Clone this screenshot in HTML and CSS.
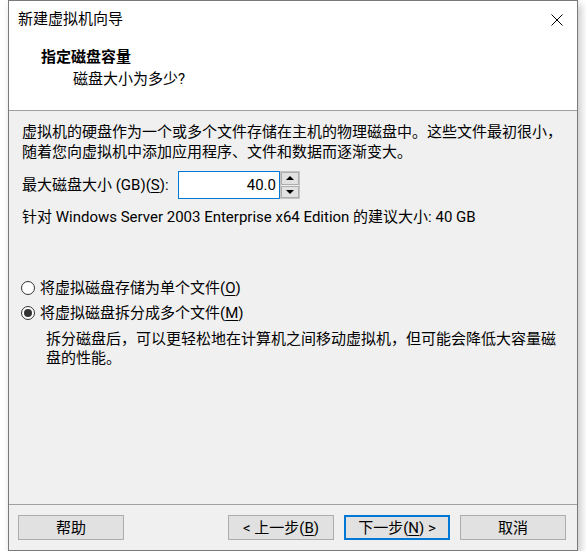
FILE: index.html
```html
<!DOCTYPE html>
<html lang="zh-CN">
<head>
<meta charset="utf-8">
<title>新建虚拟机向导</title>
<link rel="stylesheet" href="styles.css">
</head>
<body>
<div class="window">
  <div class="titlebar">
    <span class="title">新建虚拟机向导</span>
    <svg class="close" width="12" height="12" viewBox="0 0 12 12"><path d="M0.5 0.5 L11.5 11.5 M11.5 0.5 L0.5 11.5" stroke="#000" stroke-width="1" fill="none"/></svg>
  </div>
  <div class="header">
    <div class="heading">指定磁盘容量</div>
    <div class="subheading">磁盘大小为多少?</div>
  </div>
  <div class="content">
    <p class="para">虚拟机的硬盘作为一个或多个文件存储在主机的物理磁盘中。这些文件最初很小，<br>随着您向虚拟机中添加应用程序、文件和数据而逐渐变大。</p>
    <div class="size-row">
      <label class="size-label">最大磁盘大小 (GB)(<u>S</u>):</label>
      <div class="spin">
        <div class="spin-input">40.0</div>
        <div class="spin-buttons">
          <div class="spin-btn"><span class="arrow-up"></span></div>
          <div class="spin-btn"><span class="arrow-down"></span></div>
        </div>
      </div>
    </div>
    <p class="recommend">针对 Windows Server 2003 Enterprise x64 Edition 的建议大小: 40 GB</p>
    <div class="radios">
      <div class="radio-row"><span class="radio"></span><span>将虚拟磁盘存储为单个文件(<u>O</u>)</span></div>
      <div class="radio-row"><span class="radio checked"></span><span>将虚拟磁盘拆分成多个文件(<u>M</u>)</span></div>
    </div>
    <p class="desc">拆分磁盘后，可以更轻松地在计算机之间移动虚拟机，但可能会降低大容量磁<br>盘的性能。</p>
  </div>
  <div class="footer">
    <button class="btn">帮助</button>
    <div class="spacer"></div>
    <button class="btn">&lt; 上一步(<u>B</u>)</button>
    <button class="btn primary">下一步(<u>N</u>) &gt;</button>
    <button class="btn">取消</button>
  </div>
</div>
</body>
</html>
```
FILE: styles.css
```css
html, body {
  margin: 0;
  padding: 0;
  background: #ffffff;
}
body {
  font-family: Roboto, "Noto Sans CJK SC", sans-serif;
  font-size: 15px;
  color: #000;
}
.window {
  margin-left: 8px;
  width: 570px;
  height: 551px;
  box-sizing: border-box;
  border: 1px solid #7a7a7a;
  background: #f0f0f0;
  display: flex;
  flex-direction: column;
  box-shadow: 3px 4px 8px rgba(0, 0, 0, 0.22);
}
.titlebar {
  height: 37px;
  background: #fff;
  display: flex;
  align-items: center;
  padding-left: 9px;
  padding-right: 14px;
}
.title {
  flex: 1;
  line-height: 20px;
  padding-bottom: 1px;
}
.close {
  display: block;
}
.header {
  background: #fff;
  padding: 9px 0 21px 32px;
  border-bottom: 1px solid #a0a0a0;
}
.heading {
  font-weight: bold;
  line-height: 20px;
}
.subheading {
  margin-top: 2px;
  margin-left: 32px;
  line-height: 20px;
}
.content {
  flex: 1;
  padding: 11px 0 0 13px;
}
p {
  margin: 0;
}
.para {
  line-height: 20px;
}
.size-row {
  margin-top: 9px;
  display: flex;
  align-items: center;
  height: 28px;
}
.size-label {
  width: 156px;
  line-height: 20px;
}
.spin {
  display: flex;
  height: 28px;
}
.spin-input {
  width: 97px;
  height: 26px;
  border: 1px solid #0078d7;
  background: #fff;
  text-align: right;
  line-height: 26px;
  padding-right: 3px;
}
.spin-buttons {
  width: 18px;
  height: 26px;
  border: 1px solid #c4c4c4;
  display: flex;
  flex-direction: column;
  gap: 1px;
  background: #f0f0f0;
}
.spin-btn {
  flex: 1;
  background: #e1e1e1;
  border: 1px solid #adadad;
  display: flex;
  align-items: center;
  justify-content: center;
}
.arrow-up {
  width: 0;
  height: 0;
  border-left: 4px solid transparent;
  border-right: 4px solid transparent;
  border-bottom: 4px solid #000;
}
.arrow-down {
  width: 0;
  height: 0;
  border-left: 4px solid transparent;
  border-right: 4px solid transparent;
  border-top: 4px solid #000;
}
.recommend {
  margin-top: 8px;
  line-height: 20px;
}
.radios {
  margin-top: 51px;
  display: flex;
  flex-direction: column;
  gap: 5px;
}
.radio-row {
  display: flex;
  align-items: center;
  line-height: 20px;
  margin-left: -1px;
}
.radio {
  width: 12px;
  height: 12px;
  border: 1px solid #333;
  border-radius: 50%;
  background: #fff;
  margin-right: 5px;
  position: relative;
  flex: none;
}
.radio.checked::after {
  content: "";
  position: absolute;
  left: 2px;
  top: 2px;
  width: 8px;
  height: 8px;
  border-radius: 50%;
  background: #333;
}
.desc {
  margin-top: 7px;
  margin-left: 24px;
  line-height: 19px;
}
.footer {
  border-top: 1px solid #a0a0a0;
  padding: 10px 11px 10px 9px;
  display: flex;
  gap: 10px;
  height: 25px;
}
.spacer {
  flex: 1;
}
.btn {
  width: 106px;
  height: 25px;
  box-sizing: border-box;
  background: #e1e1e1;
  border: 1px solid #adadad;
  font-family: Roboto, "Noto Sans CJK SC", sans-serif;
  font-size: 15px;
  color: #000;
  padding: 0;
  line-height: 20px;
}
.btn.primary {
  border: 2px solid #0078d7;
}
u {
  text-decoration: underline;
  text-underline-offset: 2px;
}
```
